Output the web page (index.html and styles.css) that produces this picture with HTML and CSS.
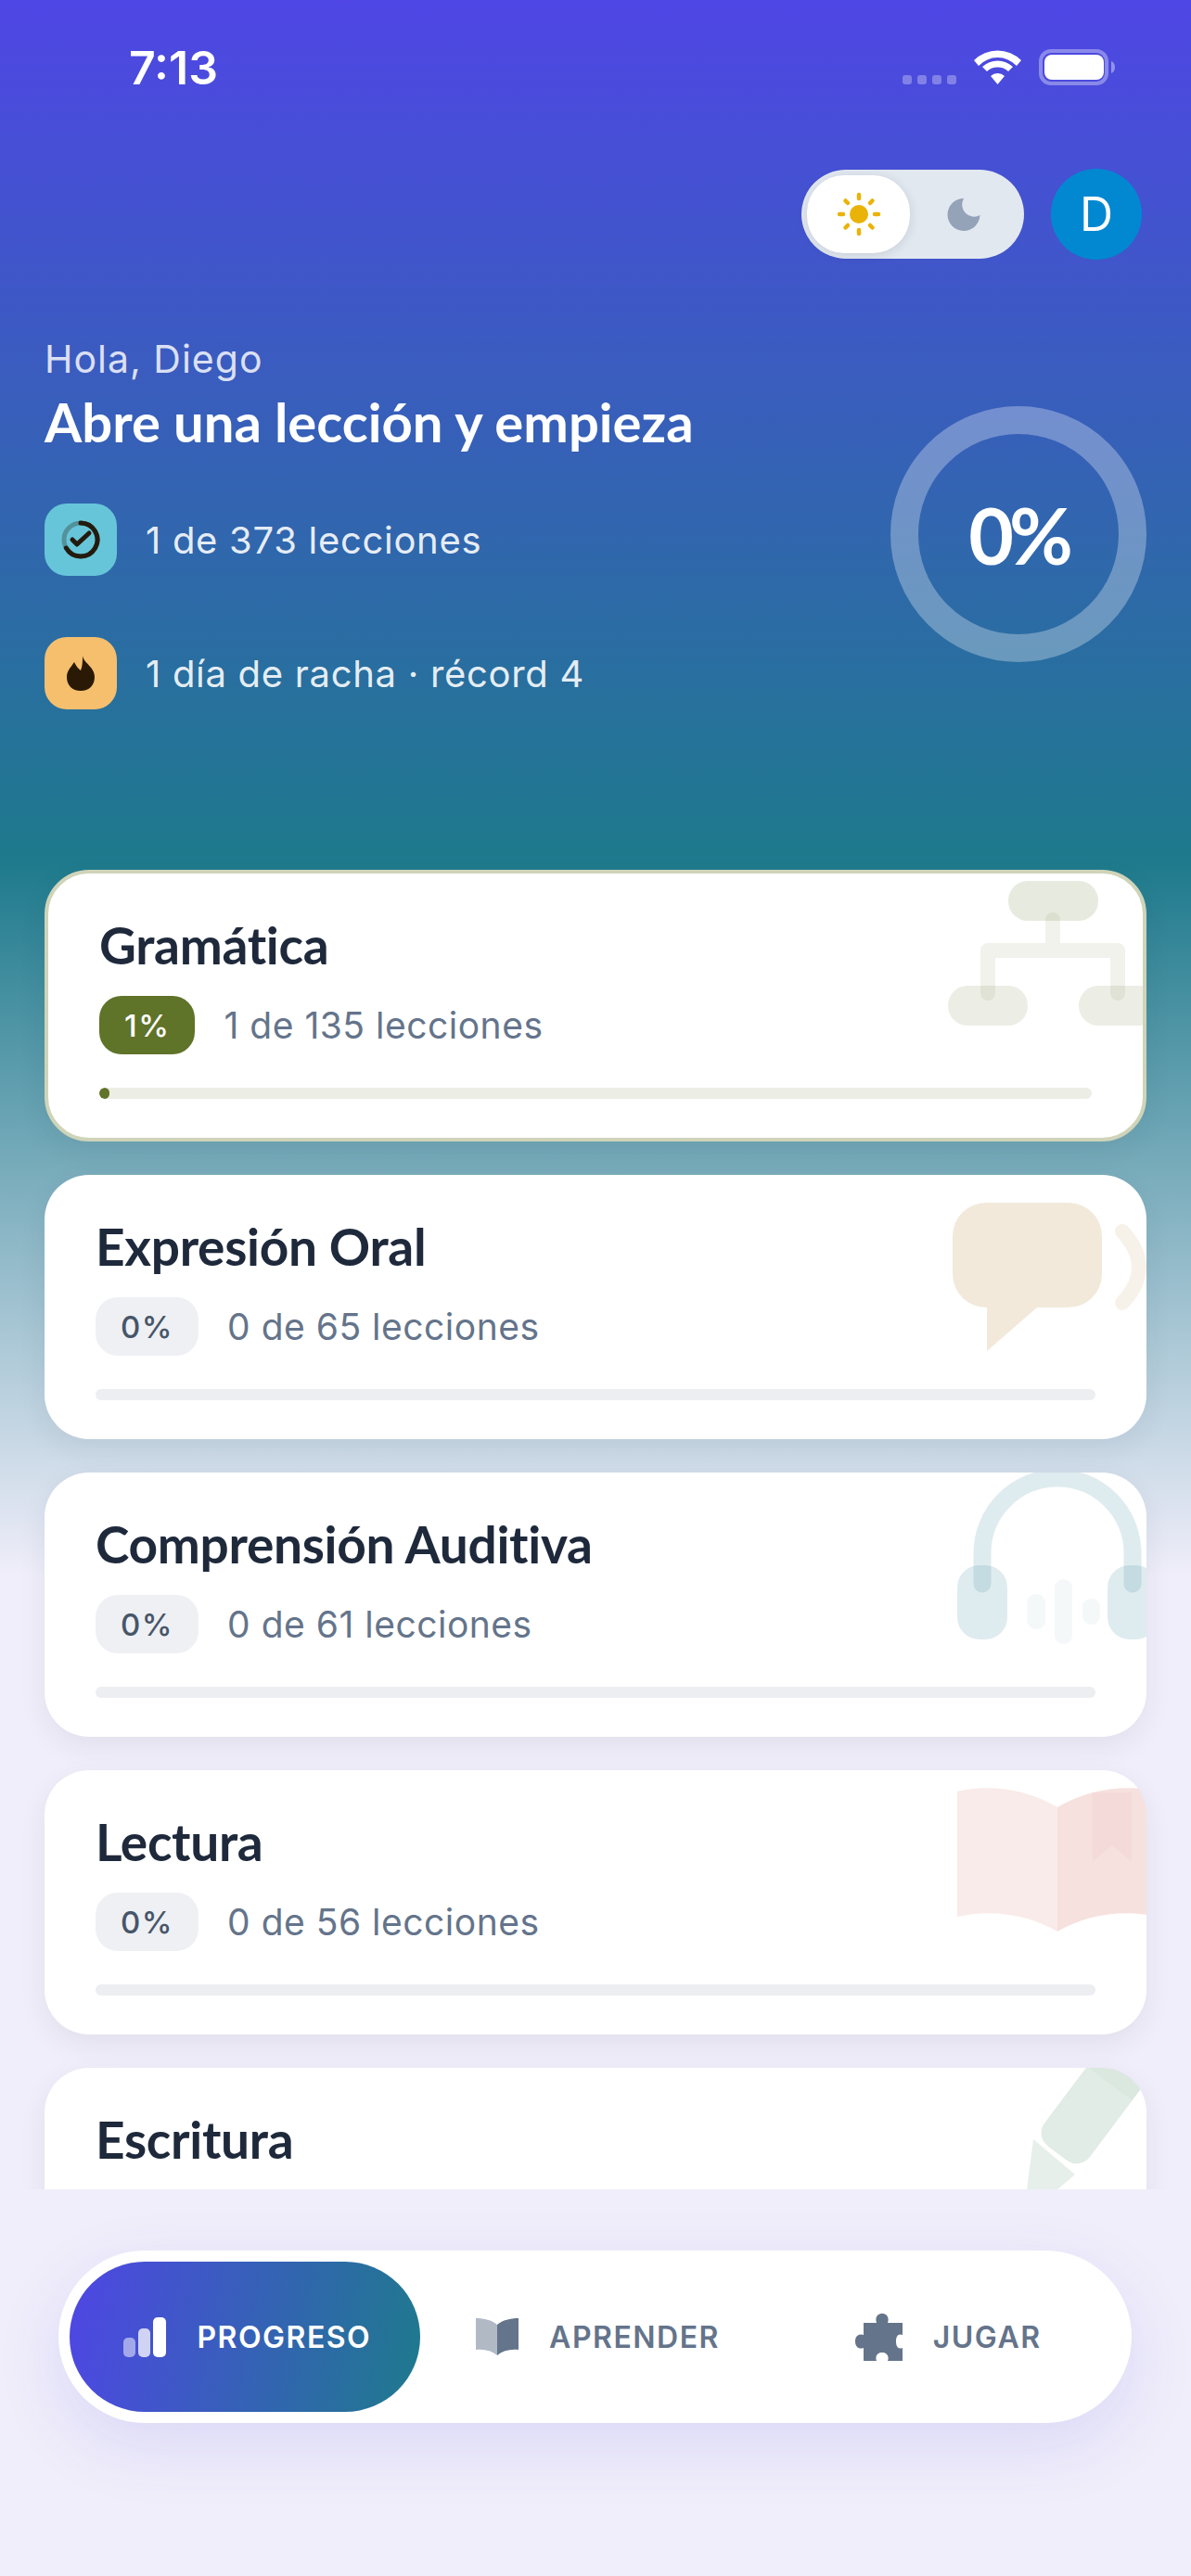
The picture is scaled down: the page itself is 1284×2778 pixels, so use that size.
FILE: index.html
```html
<!DOCTYPE html>
<html lang="es">
<head>
    <meta charset="UTF-8">
    <meta name="viewport" content="width=device-width, initial-scale=1.0">
    <title>Progreso</title>
    <link rel="stylesheet" href="styles.css">
</head>
<body>
    <div class="screen">
        <div class="scroll">
            <!-- Status bar -->
            <div class="status">
                <span class="clock">7:13</span>
                <div class="status-icons">
                    <div class="signal"><i></i><i></i><i></i><i></i></div>
                    <svg class="wifi" width="51" height="37" viewBox="0 0 51 37" fill="#fff">
                        <path d="M0 11A36 36 0 0 1 51 11L46 17A28 28 0 0 0 5 17Z"/>
                        <path d="M9 18A24 24 0 0 1 42 18L37 23A17 17 0 0 0 14 23Z"/>
                        <path d="M18 28A11 11 0 0 1 33 28L25.500 37Z"/>
                    </svg>
                    <svg class="battery" width="82" height="39" viewBox="0 0 82 39">
                        <rect x="2" y="2" width="71" height="35" rx="11" fill="none" stroke="#fff" stroke-opacity=".35" stroke-width="4"/>
                        <rect x="6" y="6" width="64" height="27" rx="8" fill="#fff"/>
                        <path d="M78 13C81 14 82 17 82 19.500S81 25 78 26Z" fill="#fff" fill-opacity=".4"/>
                    </svg>
                </div>
            </div>

            <!-- Theme switch and avatar -->
            <div class="topbar">
                <div class="theme-switch">
                    <div class="theme-thumb">
                        <svg width="48" height="48" viewBox="0 0 48 48" stroke="#eab308" stroke-width="4.500" stroke-linecap="round" fill="#eab308">
                            <circle cx="24" cy="24" r="10" stroke="none"/>
                            <path d="M24 3V7M24 41V45M3 24H7M41 24H45M9.500 9.500L12 12M36 36L38.500 38.500M9.500 38.500L12 36M36 12L38.500 9.500"/>
                        </svg>
                    </div>
                    <div class="theme-other">
                        <svg width="37" height="37" viewBox="0 0 37 37" fill="#94a3b8">
                            <path d="M18 1A17.500 17.500 0 1 0 35.500 19A13 13 0 0 1 18 1Z"/>
                        </svg>
                    </div>
                </div>
                <div class="avatar">D</div>
            </div>

            <!-- Greeting, stats and overall ring -->
            <div class="hero">
                <div class="hero-text">
                    <div class="hello">Hola, Diego</div>
                    <h1>Abre una lección y empieza</h1>
                    <div class="stat">
                        <div class="stat-icon stat-cyan">
                            <svg width="48" height="48" viewBox="0 0 48 48" fill="none" stroke="#231a0e" stroke-width="5" stroke-linecap="round" stroke-linejoin="round">
                                <circle cx="24" cy="24" r="18" stroke-opacity=".3"/>
                                <path d="M24 6A18 18 0 1 1 8.400 33"/>
                                <path d="M15 24L20 29L33 17"/>
                            </svg>
                        </div>
                        <span>1 de 373 lecciones</span>
                    </div>
                    <div class="stat">
                        <div class="stat-icon stat-amber">
                            <svg width="30" height="38" viewBox="0 0 30 38" fill="#2a1a05">
                                <path d="M17 0C18 8 30 12 30 23C30 32 24 38 15 38C6 38 0 32 0 23C0 16 5 12 8 7C10 11 12 14 15 16C17 11 17 6 17 0Z"/>
                            </svg>
                        </div>
                        <span>1 día de racha · récord 4</span>
                    </div>
                </div>
                <div class="ring">0%</div>
            </div>

            <!-- Skill cards -->
            <div class="cards">
                <div class="card card-active">
                    <svg class="deco" viewBox="0 0 220 285" fill="#5f7329">
                        <path d="M123 50V83M53 129V83H193V129" fill="none" stroke="#5f7329" stroke-width="16" stroke-linecap="round" stroke-linejoin="round" opacity=".09"/>
                        <rect x="75" y="8" width="97" height="43" rx="21" opacity=".15"/>
                        <rect x="10" y="121" width="86" height="43" rx="21" opacity=".12"/>
                        <rect x="151" y="121" width="86" height="43" rx="21" opacity=".12"/>
                    </svg>
                    <div class="card-title">Gramática</div>
                    <div class="card-meta">
                        <span class="badge badge-olive">1%</span>
                        <span class="count">1 de 135 lecciones</span>
                    </div>
                    <div class="track track-olive"><div class="fill" style="width: 1%"></div></div>
                </div>

                <div class="card">
                    <svg class="deco" viewBox="0 0 220 285" fill="#a96c10">
                        <path d="M47 30H136A36 36 0 0 1 172 66V107A36 36 0 0 1 136 143H102L48 190V143H47A36 36 0 0 1 11 107V66A36 36 0 0 1 47 30Z" opacity=".15"/>
                        <path d="M194 61Q230 100 194 138" fill="none" stroke="#a96c10" stroke-width="16" stroke-linecap="round" opacity=".09"/>
                    </svg>
                    <div class="card-title">Expresión Oral</div>
                    <div class="card-meta">
                        <span class="badge">0%</span>
                        <span class="count">0 de 65 lecciones</span>
                    </div>
                    <div class="track"></div>
                </div>

                <div class="card">
                    <svg class="deco" viewBox="0 0 220 285" fill="#1f7a8c">
                        <path d="M43 120V87A81 81 0 0 1 205 87V120" fill="none" stroke="#1f7a8c" stroke-width="19" stroke-linecap="round" opacity=".14"/>
                        <rect x="16" y="100" width="54" height="80" rx="24" opacity=".14"/>
                        <rect x="178" y="100" width="54" height="80" rx="24" opacity=".14"/>
                        <rect x="91.500" y="131" width="19.500" height="38" rx="9" opacity=".05"/>
                        <rect x="121" y="115" width="19" height="70" rx="9" opacity=".05"/>
                        <rect x="151" y="136" width="19" height="28" rx="9" opacity=".05"/>
                    </svg>
                    <div class="card-title">Comprensión Auditiva</div>
                    <div class="card-meta">
                        <span class="badge">0%</span>
                        <span class="count">0 de 61 lecciones</span>
                    </div>
                    <div class="track"></div>
                </div>

                <div class="card">
                    <svg class="deco" viewBox="0 0 220 285" fill="#c0392b">
                        <path d="M16 23C50 15 90 20 124 40V174C90 154 50 150 16 158Z" opacity=".1"/>
                        <path d="M124 40C158 20 198 15 232 23V158C198 150 158 154 124 174Z" opacity=".15"/>
                        <path d="M162 24H204V99L183 81L162 99Z" opacity=".03"/>
                    </svg>
                    <div class="card-title">Lectura</div>
                    <div class="card-meta">
                        <span class="badge">0%</span>
                        <span class="count">0 de 56 lecciones</span>
                    </div>
                    <div class="track"></div>
                </div>

                <div class="card">
                    <svg class="deco" viewBox="0 0 220 285" fill="#2e7d4f">
                        <path d="M98 77L143 115L87 163Z" opacity=".12"/>
                        <g transform="translate(99.400 73.800) rotate(-53.130)">
                            <rect width="125" height="61" rx="18" opacity=".15"/>
                            <path d="M94 0H107A18 18 0 0 1 125 18V43A18 18 0 0 1 107 61H94Z" opacity=".03"/>
                        </g>
                    </svg>
                    <div class="card-title">Escritura</div>
                    <div class="card-meta">
                        <span class="badge">0%</span>
                        <span class="count">0 de 56 lecciones</span>
                    </div>
                    <div class="track"></div>
                </div>
            </div>
        </div>

        <!-- Bottom navigation -->
        <div class="tabbar">
            <nav class="tabs">
                <a class="tab tab-active">
                    <svg width="46" height="43" viewBox="0 0 46 43" fill="#fff">
                        <rect y="22" width="13" height="21" rx="5" opacity=".5"/>
                        <rect x="16" y="12" width="13" height="31" rx="5" opacity=".75"/>
                        <rect x="32" width="14" height="43" rx="5"/>
                    </svg>
                    <span>PROGRESO</span>
                </a>
                <a class="tab">
                    <svg width="46" height="40" viewBox="0 0 46 40" fill="#64748b">
                        <path d="M0 0C9 0 17 2 23 7V40C17 35 9 33 0 34Z" opacity=".5"/>
                        <path d="M46 0C37 0 29 2 23 7V40C29 35 37 33 46 34Z"/>
                    </svg>
                    <span>APRENDER</span>
                </a>
                <a class="tab">
                    <svg width="51" height="51" viewBox="0 0 51 51" fill="#64748b">
                        <path d="M9 10H23C21 4 24 0 29 0S37 4 35 10H51V23C46 21 44 25 44 30S46 39 51 37V51H35C37 46 34 42 29 42S21 46 23 51H9V37C4 39 0 36 0 30S4 21 9 23Z"/>
                    </svg>
                    <span>JUGAR</span>
                </a>
            </nav>
        </div>
    </div>
</body>
</html>
```

FILE: styles.css
```css
* {
    box-sizing: border-box;
}
body {
    margin: 0;
    font-family: Inter, "Liberation Sans", sans-serif;
    color: #fff;
}
.screen {
    display: flex;
    flex-direction: column;
    width: 1284px;
    height: 2778px;
    overflow: hidden;
    background-color: #f0eefa;
}
.scroll {
    height: 2361px;
    overflow: hidden;
    background: linear-gradient(180deg, #4f46e5 0, #1e7a8c 930px, #f0eefa 1700px);
}

/* Status bar */
.status {
    display: flex;
    justify-content: space-between;
    align-items: flex-start;
    height: 182px;
    padding: 44px 82px 0 139px;
}
.clock {
    font-size: 50px;
    line-height: 58px;
    font-weight: 600;
}
.status-icons {
    display: flex;
    align-items: flex-end;
    gap: 19px;
    margin-top: 9px;
}
.signal {
    display: flex;
    gap: 6px;
    margin-bottom: 1px;
}
.signal i {
    width: 10px;
    height: 10px;
    border-radius: 3px;
    background-color: rgba(255, 255, 255, 0.3);
}
.wifi {
    margin-bottom: 1px;
}

/* Theme switch and avatar */
.topbar {
    display: flex;
    justify-content: flex-end;
    align-items: center;
    gap: 29px;
    padding-right: 53px;
}
.theme-switch {
    display: flex;
    align-items: center;
    width: 240px;
    height: 96px;
    padding: 6px;
    border-radius: 48px;
    background-color: #e2e8f0;
}
.theme-thumb {
    display: flex;
    justify-content: center;
    align-items: center;
    width: 111px;
    height: 84px;
    border-radius: 40px;
    background-color: #fff;
    box-shadow: 0 2px 12px rgba(15, 23, 42, 0.12);
}
.theme-other {
    display: flex;
    flex: 1;
    justify-content: center;
    align-items: center;
}
.avatar {
    display: flex;
    justify-content: center;
    align-items: center;
    width: 98px;
    height: 98px;
    border-radius: 50%;
    background-color: #0288d1;
    font-size: 50px;
}

/* Greeting */
.hero {
    display: flex;
    justify-content: space-between;
    align-items: flex-start;
    padding: 83px 48px 0;
}
.hello {
    font-size: 41px;
    line-height: 48px;
    letter-spacing: 1px;
    color: rgba(255, 255, 255, 0.82);
}
h1 {
    margin: 10px 0 0;
    font-family: Lato, sans-serif;
    font-size: 58px;
    line-height: 68px;
    font-weight: 700;
}
.stat {
    display: flex;
    align-items: center;
    gap: 31px;
    font-size: 40px;
    letter-spacing: 0.7px;
    color: rgba(255, 255, 255, 0.9);
}
.stat + .stat {
    margin-top: 66px;
}
h1 + .stat {
    margin-top: 54px;
}
.stat-icon {
    display: flex;
    justify-content: center;
    align-items: center;
    width: 78px;
    height: 78px;
    border-radius: 24px;
}
.stat-cyan {
    background-color: #67c5d9;
}
.stat-amber {
    background-color: #f5bf6e;
}
.ring {
    display: flex;
    justify-content: center;
    align-items: center;
    width: 276px;
    height: 276px;
    margin-top: 75px;
    border: 30px solid rgba(255, 255, 255, 0.3);
    border-radius: 50%;
    font-family: Lato, sans-serif;
    font-size: 84px;
    font-weight: 700;
    letter-spacing: -5px;
}

/* Skill cards */
.cards {
    display: flex;
    flex-direction: column;
    gap: 36px;
    margin-top: 173px;
    padding: 0 48px;
}
.card {
    position: relative;
    flex-shrink: 0;
    overflow: hidden;
    height: 285px;
    padding: 47px 55px 42px;
    border-radius: 48px;
    background-color: #fff;
    box-shadow: 0 10px 30px rgba(30, 41, 59, 0.07);
}
.card-active {
    height: 293px;
    border: 4px solid #cfd4b9;
}
.deco {
    position: absolute;
    top: 0;
    right: 0;
    width: 220px;
    height: 285px;
}
.card-title {
    position: relative;
    font-family: Lato, sans-serif;
    font-size: 55px;
    line-height: 60px;
    font-weight: 700;
    letter-spacing: -0.3px;
    color: #1e293b;
}
.card-meta {
    position: relative;
    display: flex;
    align-items: center;
    gap: 31px;
    margin-top: 25px;
}
.badge {
    display: flex;
    align-items: center;
    height: 63px;
    padding: 0 27px;
    border-radius: 24px;
    background-color: #eef0f4;
    font-size: 33px;
    font-weight: 500;
    letter-spacing: 1.500px;
    color: #475569;
}
.badge-olive {
    background-color: #5f7329;
    color: #fff;
}
.count {
    font-size: 39px;
    letter-spacing: 0.5px;
    color: #64748b;
}
.track {
    position: relative;
    height: 12px;
    margin-top: 36px;
    overflow: hidden;
    border-radius: 6px;
    background-color: #eceef2;
}
.track-olive {
    background-color: #ecede4;
}
.fill {
    height: 100%;
    border-radius: 6px;
    background-color: #5f7329;
}

/* Bottom navigation */
.tabbar {
    flex: 1;
    padding: 66px 64px 0 63px;
}
.tabs {
    display: flex;
    height: 186px;
    padding: 12px;
    border-radius: 93px;
    background-color: #fff;
    box-shadow: 0 24px 70px rgba(79, 70, 229, 0.13);
}
.tab {
    display: flex;
    flex: 1;
    justify-content: center;
    align-items: center;
    gap: 33px;
    padding-left: 6px;
    border-radius: 81px;
    font-size: 32px;
    font-weight: 600;
    letter-spacing: 1.500px;
    color: #64748b;
}
.tab-active {
    background: linear-gradient(100deg, #4f46e5, #1e7a8c);
    color: #fff;
}
```
